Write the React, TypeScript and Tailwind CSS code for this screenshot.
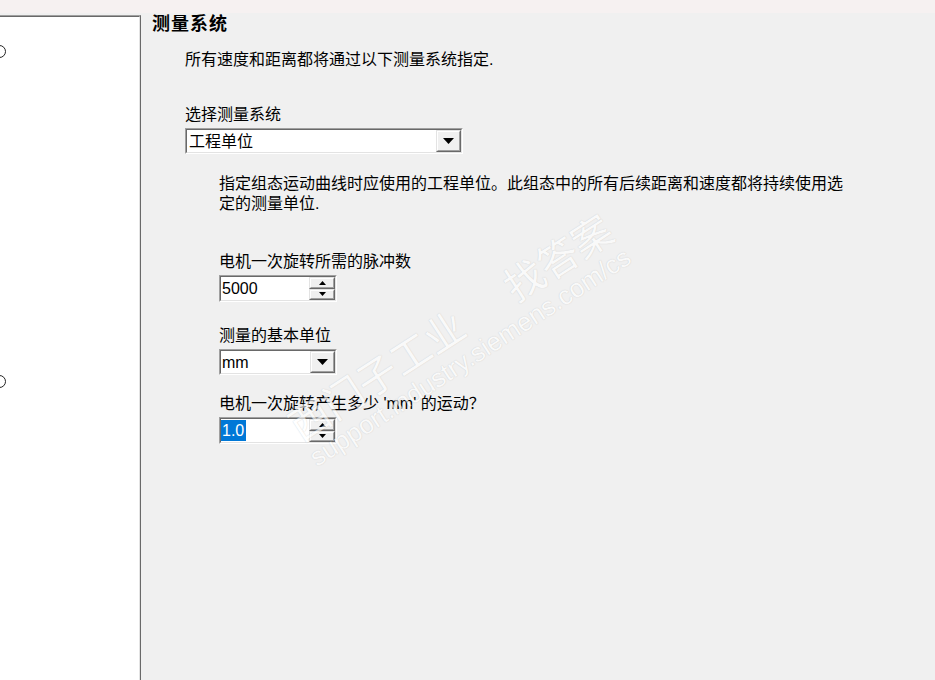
import React from "react";

const FONT = '"Liberation Sans", "Noto Sans CJK SC", sans-serif';

function Sunken({ className, children }: { className: string; children: React.ReactNode }) {
  return (
    <div className={`border border-t-[#a0a0a0] border-l-[#a0a0a0] border-r-white border-b-white ${className}`}>
      <div className="flex h-full border border-t-[#696969] border-l-[#696969] border-r-[#e3e3e3] border-b-[#e3e3e3] bg-white">
        {children}
      </div>
    </div>
  );
}

function Raised({ className, children }: { className: string; children: React.ReactNode }) {
  return (
    <div className={`border border-t-[#e3e3e3] border-l-[#e3e3e3] border-r-[#696969] border-b-[#696969] ${className}`}>
      <div className="flex h-full items-center justify-center border border-t-white border-l-white border-r-[#a0a0a0] border-b-[#a0a0a0] bg-[#f0f0f0]">
        {children}
      </div>
    </div>
  );
}

function DropArrow() {
  return (
    <svg width="11" height="6" viewBox="0 0 11 6">
      <path d="M0 0h11L5.5 6z" fill="#000" />
    </svg>
  );
}

function SmallArrow({ up }: { up?: boolean }) {
  return (
    <svg width="7" height="4" viewBox="0 0 7 4">
      <path d={up ? "M0 4h7L3.5 0z" : "M0 0h7L3.5 4z"} fill="#000" />
    </svg>
  );
}

function Spinner({ children }: { children: React.ReactNode }) {
  return (
    <Sunken className="w-[118px] h-[27px]">
      <div className="flex-1 text-[16px] leading-[23px] text-black">{children}</div>
      <div className="flex w-[26px] flex-col">
        <Raised className="flex-1">
          <SmallArrow up />
        </Raised>
        <Raised className="flex-1">
          <SmallArrow />
        </Raised>
      </div>
    </Sunken>
  );
}

export default function App() {
  return (
    <div
      className="relative flex h-[680px] w-[935px] flex-col overflow-hidden bg-[#f0f0f0] text-black"
      style={{ fontFamily: FONT }}
    >
      <div className="h-[13px] bg-[#f6f1f1]" />

      <div className="flex flex-1">
        {/* left tree panel */}
        <div className="mt-[2px] w-[141px] border-t border-r border-t-[#a0a0a0] border-r-[#696969]">
          <div className="flex h-full flex-col overflow-hidden border-t border-r border-t-[#696969] border-r-[#e3e3e3] bg-white">
            <div className="-ml-[7px] mt-[28px] h-[13px] w-[13px] rounded-full border border-[#222]" />
            <div className="-ml-[7px] mt-[317px] h-[13px] w-[13px] rounded-full border border-[#222]" />
          </div>
        </div>

        {/* settings page */}
        <div className="flex flex-1 flex-col">
          <div className="ml-[11px] mt-[1px] h-[20px] text-[18px] font-bold leading-[20px] tracking-[1px]">
            测量系统
          </div>

          <div className="ml-[44px] mt-[16px] h-[20px] text-[16px] leading-[20px]">
            所有速度和距离都将通过以下测量系统指定.
          </div>

          <div className="ml-[44px] mt-[35px] h-[20px] text-[16px] leading-[20px]">选择测量系统</div>

          <Sunken className="ml-[44px] mt-[3px] h-[26px] w-[278px]">
            <div className="flex-1 pl-[2px] pt-[1px] text-[16px] leading-[22px]">工程单位</div>
            <Raised className="w-[25px]">
              <DropArrow />
            </Raised>
          </Sunken>

          <div className="ml-[78px] mt-[20px] w-[630px] text-[16px] leading-[20px]">
            指定组态运动曲线时应使用的工程单位。此组态中的所有后续距离和速度都将持续使用选定的测量单位.
          </div>

          <div className="ml-[78px] mt-[38px] h-[20px] text-[16px] leading-[20px]">电机一次旋转所需的脉冲数</div>
          <div className="ml-[78px] mt-[3px]">
            <Spinner>
              <span className="pl-[1px]">5000</span>
            </Spinner>
          </div>

          <div className="ml-[78px] mt-[24px] h-[20px] text-[16px] leading-[20px]">测量的基本单位</div>
          <Sunken className="ml-[78px] mt-[3px] h-[26px] w-[118px]">
            <div className="flex-1 pl-[1px] pt-[1px] text-[16px] leading-[22px]">mm</div>
            <Raised className="w-[25px]">
              <DropArrow />
            </Raised>
          </Sunken>

          <div className="ml-[78px] mt-[19px] h-[20px] text-[16px] leading-[20px]">
            电机一次旋转产生多少 'mm' 的运动？
          </div>
          <div className="ml-[78px] mt-[3px]">
            <Spinner>
              <span className="my-[1px] inline-block bg-[#0078d7] pl-[1px] pr-[2px] leading-[21px] text-white">1.0</span>
            </Spinner>
          </div>
        </div>
      </div>

      {/* watermark */}
      <div className="pointer-events-none absolute left-[280px] top-[410px] origin-top-left rotate-[-33deg] whitespace-nowrap text-white opacity-60 [text-shadow:0_0_1px_rgba(0,0,0,0.3)]">
        <div className="text-[40px] leading-[44px]" style={{ fontFamily: '"Noto Sans CJK SC", sans-serif' }}>
          西门子工业<span className="ml-[56px]">找答案</span>
        </div>
        <div className="text-[26px] leading-[30px]">support.industry.siemens.com/cs</div>
      </div>
    </div>
  );
}
